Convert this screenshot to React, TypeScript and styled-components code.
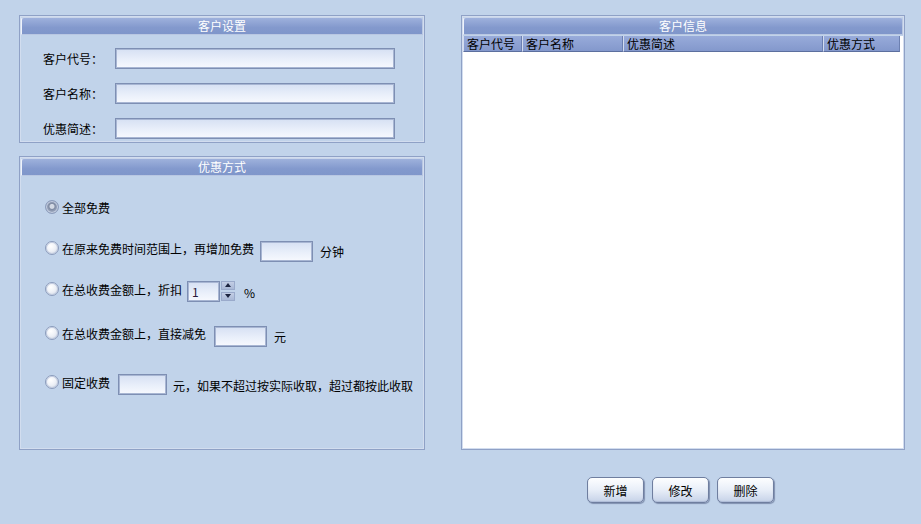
import styled, { createGlobalStyle } from "styled-components";

const GlobalStyle = createGlobalStyle`
  html, body {
    margin: 0;
    padding: 0;
    background: #c1d3ea;
  }
  body {
    font-family: "Noto Sans CJK SC", "DejaVu Sans", sans-serif;
    font-size: 12px;
    color: #000;
  }
`;

const Page = styled.div`
  width: 921px;
  height: 524px;
  display: flex;
  align-items: flex-start;
  padding: 15px 0 0 19px;
  box-sizing: border-box;
  gap: 36px;
`;

const LeftColumn = styled.div`
  width: 406px;
  display: flex;
  flex-direction: column;
  gap: 13px;
`;

const RightColumn = styled.div`
  width: 444px;
  display: flex;
  flex-direction: column;
  align-items: center;
`;

const Panel = styled.div<{ h: number }>`
  width: 100%;
  height: ${(p) => p.h}px;
  box-sizing: border-box;
  border: 1px solid #8fa1c6;
  box-shadow: inset 0 0 0 1px #d2ddef;
  padding: 1px;
  display: flex;
  flex-direction: column;
`;

const PanelHeader = styled.div`
  height: 18px;
  flex-shrink: 0;
  box-sizing: border-box;
  border: 1px solid #b9c7e2;
  border-left-color: #eef2fa;
  border-top-color: #c9d5ea;
  border-radius: 3px 3px 0 0;
  background: linear-gradient(#9eb1dc, #8399cd 60%, #7f96ca);
  color: #fff;
  text-align: center;
  line-height: 16px;
  font-size: 12px;
`;

const FormBody = styled.div`
  display: flex;
  flex-direction: column;
  gap: 14px;
  padding: 13px 0 0 22px;
`;

const FormRow = styled.div`
  display: flex;
  align-items: center;
  height: 21px;
`;

const Label = styled.span`
  width: 72px;
  flex-shrink: 0;
`;

const TextBox = styled.div<{ w: number; dy?: number; ml?: number }>`
  width: ${(p) => p.w}px;
  height: 21px;
  flex-shrink: 0;
  box-sizing: border-box;
  border: 1px solid #7e8fb3;
  box-shadow: inset 0 0 0 1px #a8b6d3;
  background: linear-gradient(#d6e0f3, #e9effa 55%, #f7f9fe);
  margin-top: ${(p) => p.dy ?? 0}px;
  margin-left: ${(p) => p.ml ?? 0}px;
  font-size: 12px;
  line-height: 19px;
  padding-left: 4px;
  color: #2a1a3a;
`;

const OptionBody = styled.div`
  display: flex;
  flex-direction: column;
  padding: 20px 0 0 24px;
`;

const OptionRow = styled.div<{ mt: number }>`
  display: flex;
  align-items: center;
  height: 22px;
  margin-top: ${(p) => p.mt}px;
  white-space: nowrap;
`;

const Radio = styled.span<{ checked?: boolean }>`
  width: 14px;
  height: 14px;
  border-radius: 50%;
  box-sizing: border-box;
  border: 1px solid #8c9cbc;
  background: ${(p) =>
    p.checked
      ? "radial-gradient(circle at 50% 45%, #d3d9e4 0 2px, #7f8ba3 3px, #96a2ba 5px)"
      : "radial-gradient(circle at 40% 35%, #ffffff, #eef1f7 45%, #c9d1e0)"};
  box-shadow: inset 0 0 0 1px #c5cfe2;
  margin-right: 3px;
  flex-shrink: 0;
`;

const Text = styled.span<{ ml?: number; dy?: number }>`
  margin-left: ${(p) => p.ml ?? 0}px;
  margin-top: ${(p) => p.dy ?? 0}px;
`;

const Spinner = styled.div`
  display: flex;
  flex-direction: column;
  gap: 2px;
  margin-left: 1px;
  margin-top: 3px;
`;

const SpinButton = styled.div`
  width: 14px;
  height: 9px;
  box-sizing: border-box;
  background: linear-gradient(#c3cee5, #a9b8d6);
  border: 1px solid #9aaacb;
  display: flex;
  align-items: center;
  justify-content: center;
`;

const Table = styled.div`
  flex: 1;
  background: #fff;
  margin-top: 1px;
  display: flex;
  flex-direction: column;
`;

const ColumnBar = styled.div`
  display: flex;
  height: 16px;
`;

const ColumnHead = styled.div<{ w: number }>`
  width: ${(p) => p.w}px;
  box-sizing: border-box;
  flex-shrink: 0;
  background: linear-gradient(#98abda, #8398cc);
  border-left: 1px solid #d3dcef;
  border-right: 1px solid #6c80b1;
  border-bottom: 1px solid #5c6f9e;
  padding-left: 3px;
  line-height: 15px;
  font-size: 12px;
  white-space: nowrap;
  overflow: hidden;
`;

const ButtonBar = styled.div`
  display: flex;
  gap: 8px;
  margin-top: 27px;
  margin-right: 5px;
`;

const Button = styled.button`
  width: 57px;
  height: 26px;
  border: 1px solid #6f7e9f;
  border-radius: 5px;
  background: linear-gradient(#fdfeff, #e8eef8 50%, #c6d2e8);
  box-shadow: 1px 1px 1px #8090b0, inset 0 -1px 1px #aebcd8;
  font-family: "Noto Sans CJK SC", sans-serif;
  font-size: 12px;
  color: #000;
  padding: 0;
`;

const Arrow = ({ up }: { up?: boolean }) => (
  <svg width="6" height="4" viewBox="0 0 6 4">
    <polygon points={up ? "0,4 3,0 6,4" : "0,0 6,0 3,4"} fill="#1c2440" />
  </svg>
);

export default function App() {
  return (
    <>
      <GlobalStyle />
      <Page>
        <LeftColumn>
          <Panel h={128}>
            <PanelHeader>客户设置</PanelHeader>
            <FormBody>
              <FormRow>
                <Label>客户代号：</Label>
                <TextBox w={280} />
              </FormRow>
              <FormRow>
                <Label>客户名称：</Label>
                <TextBox w={280} />
              </FormRow>
              <FormRow>
                <Label>优惠简述：</Label>
                <TextBox w={280} />
              </FormRow>
            </FormBody>
          </Panel>
          <Panel h={294}>
            <PanelHeader>优惠方式</PanelHeader>
            <OptionBody>
              <OptionRow mt={0}>
                <Radio checked />
                <Text>全部免费</Text>
              </OptionRow>
              <OptionRow mt={19}>
                <Radio />
                <Text>在原来免费时间范围上，再增加免费</Text>
                <TextBox w={53} dy={6} ml={6} />
                <Text ml={7} dy={6}>分钟</Text>
              </OptionRow>
              <OptionRow mt={19}>
                <Radio />
                <Text>在总收费金额上，折扣</Text>
                <TextBox w={33} dy={5} ml={5}>1</TextBox>
                <Spinner>
                  <SpinButton><Arrow up /></SpinButton>
                  <SpinButton><Arrow /></SpinButton>
                </Spinner>
                <Text ml={9} dy={7}>%</Text>
              </OptionRow>
              <OptionRow mt={22}>
                <Radio />
                <Text>在总收费金额上，直接减免</Text>
                <TextBox w={53} dy={6} ml={8} />
                <Text ml={7} dy={6}>元</Text>
              </OptionRow>
              <OptionRow mt={27}>
                <Radio />
                <Text>固定收费</Text>
                <TextBox w={49} dy={5} ml={8} />
                <Text ml={6} dy={6}>元，如果不超过按实际收取，超过都按此收取</Text>
              </OptionRow>
            </OptionBody>
          </Panel>
        </LeftColumn>
        <RightColumn>
          <Panel h={435}>
            <PanelHeader>客户信息</PanelHeader>
            <Table>
              <ColumnBar>
                <ColumnHead w={59}>客户代号</ColumnHead>
                <ColumnHead w={101}>客户名称</ColumnHead>
                <ColumnHead w={200}>优惠简述</ColumnHead>
                <ColumnHead w={77}>优惠方式</ColumnHead>
              </ColumnBar>
            </Table>
          </Panel>
          <ButtonBar>
            <Button>新增</Button>
            <Button>修改</Button>
            <Button>删除</Button>
          </ButtonBar>
        </RightColumn>
      </Page>
    </>
  );
}
